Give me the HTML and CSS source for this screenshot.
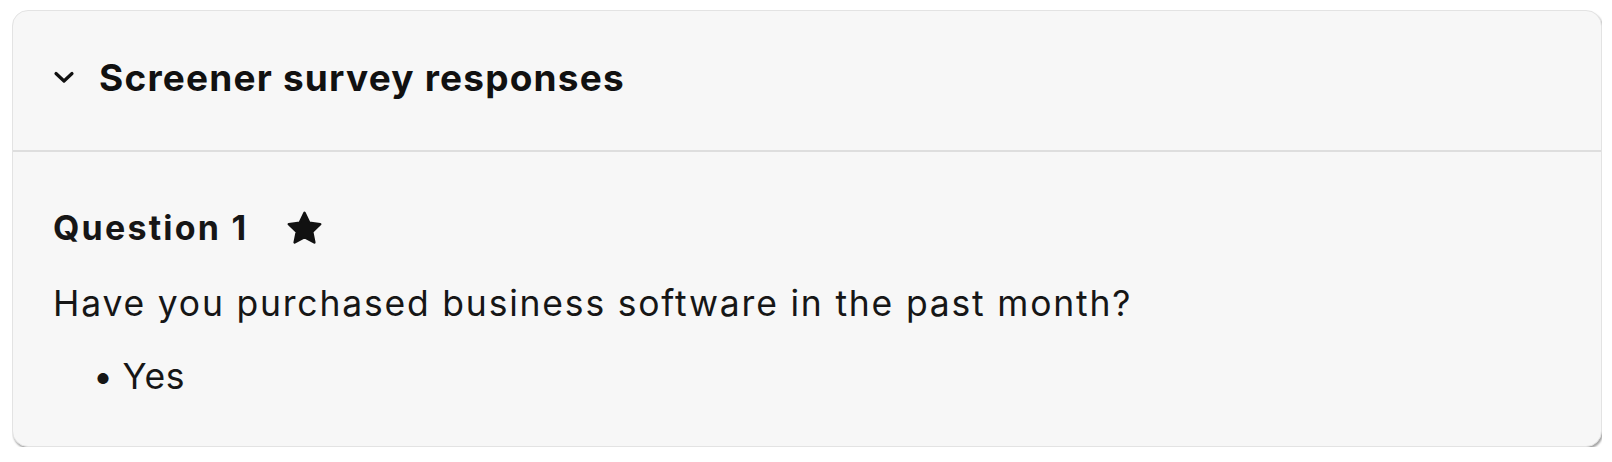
FILE: index.html
```html
<!DOCTYPE html>
<html lang="en">
<head>
    <meta charset="UTF-8">
    <title>Screener survey responses</title>
    <link rel="stylesheet" href="styles.css">
</head>
<body>

    <section class="panel">
        <header class="panel-head">
            <svg class="chevron" viewBox="0 0 22 13" width="22" height="13" aria-hidden="true">
                <path d="M3 2.5 L11 10 L19 2.5" fill="none" stroke="#111" stroke-width="3.2" stroke-linecap="round" stroke-linejoin="round"/>
            </svg>
            <h2>Screener survey responses</h2>
        </header>

        <div class="panel-body">
            <div class="question-title">
                <h3>Question 1</h3>
                <svg class="star" viewBox="0 0 24 24" width="39" height="37" aria-hidden="true">
                    <path d="M12 1.8l3.1 6.5 7.1.9-5.2 4.9 1.4 7L12 17.6l-6.4 3.5 1.4-7-5.2-4.9 7.1-.9z" fill="#111" stroke="#111" stroke-width="1.6" stroke-linejoin="round"/>
                </svg>
            </div>
            <p class="question-text">Have you purchased business software in the past month?</p>
            <ul class="answers">
                <li>Yes</li>
            </ul>
        </div>
    </section>

</body>
</html>
```

FILE: styles.css
```css
body {
    margin: 10px 10px 0 12px;
    background: #fff;
    font-family: Inter, "Noto Sans", sans-serif;
    color: #161616;
}
.panel {
    background: #f7f7f7;
    border: 1px solid #e3e3e3;
    border-radius: 16px;
    box-shadow: 1px 2px 2px rgba(0, 0, 0, 0.35);
    height: 437px;
    box-sizing: border-box;
}
.panel-head {
    display: flex;
    align-items: center;
    gap: 24px;
    height: 141px;
    padding: 0 40px;
    padding-bottom: 6px;
    border-bottom: 2px solid #dedede;
    box-sizing: border-box;
}
.chevron {
    flex-shrink: 0;
}
.panel-head h2 {
    margin: 0;
    font-size: 37px;
    font-weight: 700;
    color: #111;
    letter-spacing: 1.2px;
}
.panel-body {
    padding: 54px 40px 0;
}
.question-title {
    display: flex;
    align-items: center;
    gap: 37px;
}
.question-title h3 {
    margin: 0;
    font-size: 34px;
    font-weight: 700;
    line-height: 44px;
    letter-spacing: 2.2px;
    color: #161616;
}
.star {
    flex-shrink: 0;
}
.question-text {
    margin: 32px 0 0;
    font-size: 35.5px;
    line-height: 44px;
    font-weight: 400;
    letter-spacing: 1.8px;
}
.answers {
    list-style: none;
    margin: 29px 0 0;
    padding: 0 0 0 40px;
    font-size: 35.5px;
    line-height: 44px;
    letter-spacing: 0.6px;
}
.answers li::before {
    content: "\2022";
    margin-right: 9px;
}
```
